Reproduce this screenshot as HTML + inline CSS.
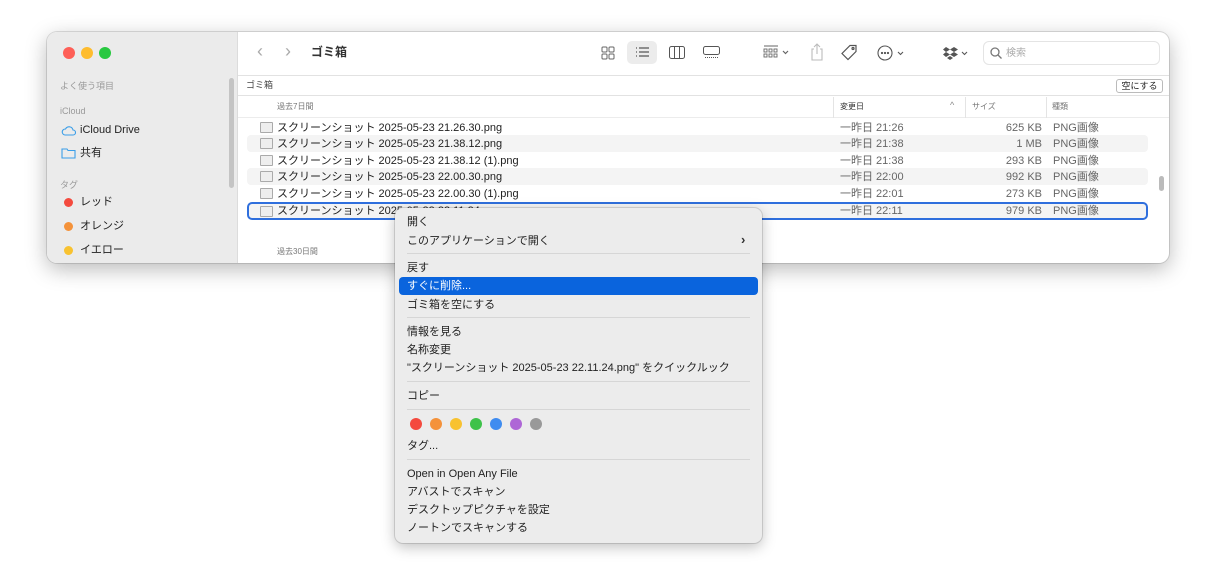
<!DOCTYPE html>
<html><head><meta charset="utf-8"><style>
*{margin:0;padding:0;box-sizing:border-box}
body{width:1216px;height:565px;background:#fff;position:relative;overflow:hidden;font-family:"Liberation Sans","Noto Sans CJK JP",sans-serif;color:#222}
.a{position:absolute;white-space:nowrap}
.win{position:absolute;left:47px;top:32px;width:1122px;height:231px;border-radius:10px;background:#fff;box-shadow:0 6px 22px rgba(0,0,0,.28),0 0 0 1px rgba(0,0,0,.12);overflow:hidden}
.side{position:absolute;left:0;top:0;width:191px;height:231px;background:#ebebeb;border-right:1px solid #dcdcdc}
.dot{position:absolute;width:12px;height:12px;border-radius:50%}
.sm{font-size:9px;color:#999}
.it{font-size:11px;color:#222;line-height:14px}
.row{position:absolute;left:200px;width:901px;height:17px;font-size:11px}
.row.s{background:#f4f4f4;border-radius:4px}
.row span{position:absolute;top:3px;line-height:13px;height:13px}
.gray{color:#666}
.menu{position:absolute;left:395px;top:208px;width:367px;height:335px;background:#ececec;border-radius:8px;box-shadow:0 4px 14px rgba(0,0,0,.25),0 0 0 1px rgba(0,0,0,.12)}
.mi{position:absolute;left:12px;font-size:11px;color:#222;line-height:14px}
.sep{position:absolute;left:12px;right:12px;height:1px;background:#d6d6d6}
.cd{position:absolute;top:210px;width:12px;height:12px;border-radius:50%}
.ic{position:absolute;width:13px;height:11px;border:1px solid #aaa;background:#eee;border-radius:1px}
</style></head><body>
<div class="win">
 <div class="side">
  <div class="dot" style="left:16px;top:15px;background:#fe5f57"></div>
  <div class="dot" style="left:34px;top:15px;background:#febc2e"></div>
  <div class="dot" style="left:52px;top:15px;background:#28c840"></div>
  <div class="a sm" style="left:13px;top:47px">よく使う項目</div>
  <div class="a sm" style="left:13px;top:74px">iCloud</div>
  <svg class="a" style="left:14px;top:93px" width="15" height="11" viewBox="0 0 15 11"><path d="M4 10h8a2.5 2.5 0 0 0 0-5 4 4 0 0 0-7.5-1A3 3 0 0 0 4 10z" fill="none" stroke="#3a9ee8" stroke-width="1.1"/></svg>
  <div class="a it" style="left:33px;top:91px">iCloud Drive</div>
  <svg class="a" style="left:14px;top:115px" width="15" height="12" viewBox="0 0 15 12"><path d="M1 2h5l1 1.5h7v7.5h-13z" fill="none" stroke="#3a9ee8" stroke-width="1.1"/></svg>
  <div class="a it" style="left:33px;top:114px">共有</div>
  <div class="a sm" style="left:13px;top:146px">タグ</div>
  <div class="dot" style="left:17px;top:166px;width:9px;height:9px;background:#f44a3e"></div>
  <div class="a it" style="left:33px;top:163px">レッド</div>
  <div class="dot" style="left:17px;top:190px;width:9px;height:9px;background:#f4923a"></div>
  <div class="a it" style="left:33px;top:187px">オレンジ</div>
  <div class="dot" style="left:17px;top:214px;width:9px;height:9px;background:#f8c230"></div>
  <div class="a it" style="left:33px;top:211px">イエロー</div>
  <div class="a" style="left:182px;top:46px;width:5px;height:110px;background:#c4c4c4;border-radius:3px"></div>
 </div>
 <div class="a" style="left:191px;top:43px;width:931px;height:1px;background:#e2e2e2"></div>
 <div class="a" style="left:210px;top:9px;font-size:18px;color:#aaa">‹</div>
 <div class="a" style="left:238px;top:9px;font-size:18px;color:#aaa">›</div>
 <div class="a" style="left:264px;top:12px;font-size:12px;line-height:16px;font-weight:bold;color:#333">ゴミ箱</div>
 <svg class="a" style="left:554px;top:14px" width="14" height="14" viewBox="0 0 14 14" fill="none" stroke="#666"><rect x="1" y="1" width="5" height="5" rx="1"/><rect x="8" y="1" width="5" height="5" rx="1"/><rect x="1" y="8" width="5" height="5" rx="1"/><rect x="8" y="8" width="5" height="5" rx="1"/></svg>
 <div class="a" style="left:580px;top:9px;width:30px;height:23px;background:#ececec;border-radius:5px"></div>
 <svg class="a" style="left:588px;top:14px" width="15" height="12" viewBox="0 0 15 12" stroke="#555" stroke-width="1.2"><path d="M1 2h1M1 6h1M1 10h1M4 2h10M4 6h10M4 10h10"/></svg>
 <svg class="a" style="left:622px;top:14px" width="16" height="13" viewBox="0 0 16 13" fill="none" stroke="#555"><rect x=".5" y=".5" width="15" height="12" rx="2"/><path d="M5.5 1v11M10.5 1v11"/></svg>
 <svg class="a" style="left:656px;top:14px" width="17" height="13" viewBox="0 0 17 13" fill="none" stroke="#555"><rect x=".5" y=".5" width="16" height="8" rx="2"/><path d="M2 11.5h13" stroke-dasharray="1 1"/></svg>
 <svg class="a" style="left:716px;top:13px" width="28" height="14" viewBox="0 0 28 14" fill="none" stroke="#666" stroke-width=".9"><path d="M1 1h14"/><rect x="1" y="4" width="3" height="3"/><rect x="6" y="4" width="3" height="3"/><rect x="11" y="4" width="3" height="3"/><rect x="1" y="9" width="3" height="3"/><rect x="6" y="9" width="3" height="3"/><rect x="11" y="9" width="3" height="3"/><path d="M20 6l2.5 2.5L25 6" stroke-width="1.2"/></svg>
 <svg class="a" style="left:763px;top:11px" width="14" height="18" viewBox="0 0 14 18" fill="none" stroke="#bbb" stroke-width="1.1"><path d="M4 6H2v11h10V6h-2M7 1v10M4 4l3-3 3 3"/></svg>
 <svg class="a" style="left:794px;top:12px" width="17" height="17" viewBox="0 0 17 17" fill="none" stroke="#555" stroke-width="1.2"><path d="M9 1.5h6v6l-8 8-6-6z"/><circle cx="12" cy="4.5" r="1"/></svg>
 <svg class="a" style="left:830px;top:13px" width="30" height="16" viewBox="0 0 30 16" fill="none" stroke="#555" stroke-width="1.1"><circle cx="8" cy="8" r="7"/><circle cx="5" cy="8" r=".6" fill="#555"/><circle cx="8" cy="8" r=".6" fill="#555"/><circle cx="11" cy="8" r=".6" fill="#555"/><path d="M21 7l2.5 2.5L26 7"/></svg>
 <svg class="a" style="left:896px;top:14px" width="30" height="14" viewBox="0 0 30 14" fill="#555"><path d="M3 1l4 2.5-4 2.5-3-2.5zM11 1l4 2.5-4 2.5-4-2.5zM3 6l4 2.5L3 11 0 8.5zM11 6l4 2.5-4 2.5-4-2.5zM7 10l3 2-3 2-3-2z"/><path d="M19 6l2.5 2.5L24 6" fill="none" stroke="#555" stroke-width="1.1"/></svg>
 <div class="a" style="left:936px;top:9px;width:177px;height:24px;border:1px solid #e4e4e4;border-radius:6px"></div>
 <svg class="a" style="left:943px;top:15px" width="12" height="12" viewBox="0 0 12 12" fill="none" stroke="#777" stroke-width="1.3"><circle cx="5" cy="5" r="4"/><path d="M8 8l3.5 3.5"/></svg>
 <div class="a" style="left:959px;top:16px;font-size:10px;line-height:12px;color:#aaa">検索</div>
 <div class="a" style="left:191px;top:44px;width:931px;height:20px;background:#fff;border-bottom:1px solid #e2e2e2"></div>
 <div class="a" style="left:199px;top:48px;font-size:9px;line-height:11px;color:#444">ゴミ箱</div>
 <div class="a" style="left:1069px;top:47px;width:47px;height:14px;border:1px solid #bbb;border-radius:3px;font-size:9px;text-align:center;line-height:12px;background:#fff">空にする</div>
 <div class="a" style="left:191px;top:65px;width:931px;height:21px;border-bottom:1px solid #ececec"></div>
 <div class="a" style="left:230px;top:69px;font-size:8px;line-height:11px;color:#777">過去7日間</div>
 <div class="a" style="left:786px;top:65px;width:1px;height:21px;background:#e4e4e4"></div>
 <div class="a" style="left:793px;top:69px;font-size:8px;line-height:11px;color:#333">変更日</div>
 <div class="a" style="left:903px;top:68px;font-size:9px;color:#888">^</div>
 <div class="a" style="left:918px;top:65px;width:1px;height:21px;background:#e4e4e4"></div>
 <div class="a" style="left:925px;top:69px;font-size:8px;line-height:11px;color:#777">サイズ</div>
 <div class="a" style="left:999px;top:65px;width:1px;height:21px;background:#e4e4e4"></div>
 <div class="a" style="left:1005px;top:69px;font-size:8px;line-height:11px;color:#777">種類</div>

 <div class="row" style="top:87px"><div class="ic" style="left:13px;top:3px"></div><span style="left:30px">スクリーンショット 2025-05-23 21.26.30.png</span><span class="gray" style="left:593px">一昨日 21:26</span><span class="gray" style="right:106px">625 KB</span><span class="gray" style="left:806px">PNG画像</span></div>
 <div class="row s" style="top:103px"><div class="ic" style="left:13px;top:3px"></div><span style="left:30px">スクリーンショット 2025-05-23 21.38.12.png</span><span class="gray" style="left:593px">一昨日 21:38</span><span class="gray" style="right:106px">1 MB</span><span class="gray" style="left:806px">PNG画像</span></div>
 <div class="row" style="top:120px"><div class="ic" style="left:13px;top:3px"></div><span style="left:30px">スクリーンショット 2025-05-23 21.38.12 (1).png</span><span class="gray" style="left:593px">一昨日 21:38</span><span class="gray" style="right:106px">293 KB</span><span class="gray" style="left:806px">PNG画像</span></div>
 <div class="row s" style="top:136px"><div class="ic" style="left:13px;top:3px"></div><span style="left:30px">スクリーンショット 2025-05-23 22.00.30.png</span><span class="gray" style="left:593px">一昨日 22:00</span><span class="gray" style="right:106px">992 KB</span><span class="gray" style="left:806px">PNG画像</span></div>
 <div class="row" style="top:153px"><div class="ic" style="left:13px;top:3px"></div><span style="left:30px">スクリーンショット 2025-05-23 22.00.30 (1).png</span><span class="gray" style="left:593px">一昨日 22:01</span><span class="gray" style="right:106px">273 KB</span><span class="gray" style="left:806px">PNG画像</span></div>
 <div class="row s" style="top:170px;height:18px;border:2px solid #2f6fdd;border-radius:5px"><div class="ic" style="left:11px;top:2px"></div><span style="left:28px;top:1px">スクリーンショット 2025-05-23 22.11.24.png</span><span class="gray" style="left:591px;top:1px">一昨日 22:11</span><span class="gray" style="right:104px;top:1px">979 KB</span><span class="gray" style="left:804px;top:1px">PNG画像</span></div>
 <div class="a" style="left:230px;top:214px;font-size:8px;line-height:11px;color:#777">過去30日間</div>
 <div class="a" style="left:1112px;top:144px;width:5px;height:15px;background:#bbb;border-radius:3px"></div>
</div>

<div class="menu">
 <div class="mi" style="top:7px">開く</div>
 <div class="mi" style="top:26px">このアプリケーションで開く</div>
 <div class="a" style="left:346px;top:24px;font-size:13px;font-weight:bold;color:#333">›</div>
 <div class="sep" style="top:45px"></div>
 <div class="mi" style="top:53px">戻す</div>
 <div class="a" style="left:4px;top:69px;width:359px;height:18px;background:#0a64dd;border-radius:4px"></div>
 <div class="mi" style="top:71px;color:#fff">すぐに削除...</div>
 <div class="mi" style="top:90px">ゴミ箱を空にする</div>
 <div class="sep" style="top:109px"></div>
 <div class="mi" style="top:117px">情報を見る</div>
 <div class="mi" style="top:135px">名称変更</div>
 <div class="mi" style="top:153px">"スクリーンショット 2025-05-23 22.11.24.png" をクイックルック</div>
 <div class="sep" style="top:173px"></div>
 <div class="mi" style="top:181px">コピー</div>
 <div class="sep" style="top:201px"></div>
 <div class="cd" style="left:15px;background:#f44a3e"></div>
 <div class="cd" style="left:35px;background:#f4923a"></div>
 <div class="cd" style="left:55px;background:#f8c230"></div>
 <div class="cd" style="left:75px;background:#3ec24a"></div>
 <div class="cd" style="left:95px;background:#3f8cf0"></div>
 <div class="cd" style="left:115px;background:#ae66d6"></div>
 <div class="cd" style="left:135px;background:#999"></div>
 <div class="mi" style="top:231px">タグ...</div>
 <div class="sep" style="top:251px"></div>
 <div class="mi" style="top:259px">Open in Open Any File</div>
 <div class="mi" style="top:277px">アバストでスキャン</div>
 <div class="mi" style="top:295px">デスクトップピクチャを設定</div>
 <div class="mi" style="top:313px">ノートンでスキャンする</div>
</div>
</body></html>
